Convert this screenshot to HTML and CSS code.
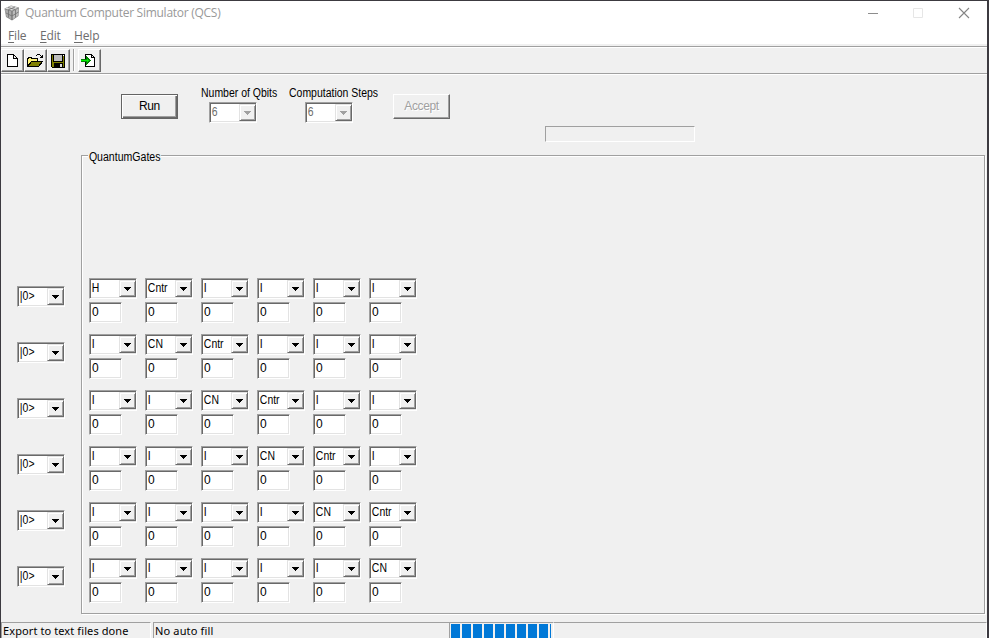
FILE: index.html
```html
<!DOCTYPE html>
<html lang="en">
<head>
<meta charset="utf-8">
<title>Quantum Computer Simulator (QCS)</title>
<link rel="stylesheet" href="styles.css">
</head>
<body>
<div class="window">
  <header class="titlebar">
    <svg class="appicon" width="16" height="16" viewBox="0 0 16 16">
      <path d="M0.500 3.500 7 .5l8 2-.5 8.500-6.500 4.500-6-3.500z" fill="#8a8a8a"/>
      <path d="M1 3.500 7 1l7 1.500-6 3z" fill="#ddd"/>
      <path d="M1 4.500l6.500 2v8L2.500 11.500z" fill="#aaa"/>
      <path d="M8.500 6.500 14.500 3.500l-.5 7L8.500 14.500z" fill="#bbb"/>
      <path d="M8 6v9M2 8l6 3 6.500-4M4.500 5v7.500M11.500 5v7.500M4 2.500l7 2M11 2 4 5" stroke="#707070" stroke-width=".8" fill="none"/>
    </svg>
    <span class="title">Quantum Computer Simulator (QCS)</span>
    <svg class="controls" width="104" height="12" viewBox="0 0 104 12" fill="none">
      <path d="M1 6.500h10" stroke="#8d8d8d"/>
      <path d="M46.500 1.500h9v9h-9z" stroke="#e6e6e6"/>
      <path d="M92 1l10 10M102 1 92 11" stroke="#858585" stroke-width="1.100"/>
    </svg>
  </header>
  <nav class="menu"><span class="m-file"><u>F</u>ile</span><span class="m-edit"><u>E</u>dit</span><span class="m-help"><u>H</u>elp</span></nav>
  <div class="toolbar">
    <button class="tool"><svg width="16" height="16" viewBox="0 0 16 16" shape-rendering="crispEdges"><path d="M3.500 1.500h6l4 4v8h-10zM9.500 1.500v4h4" fill="#fff" stroke="#000"/></svg></button>
    <button class="tool"><svg width="16" height="16" viewBox="0 0 16 16" shape-rendering="crispEdges"><path d="M.5 13.500v-8h1v-1h3v1h6v3" fill="#fff47a" stroke="#000"/><path d="M.5 13.500l4-5h11l-4 5z" fill="#808000" stroke="#000"/><path d="M9 2h1v1H9zM10 1h3v1h-3zM13 2h1v1h-1zM14 3h1v1h-1zM15 2h1v3h-1zM13 4h3v1h-3z"/></svg></button>
    <button class="tool"><svg width="16" height="16" viewBox="0 0 16 16" shape-rendering="crispEdges"><path d="M1 1h14v14H2l-1-1z"/><path d="M2 2h12v12H2z" fill="#808000"/><path d="M3 1h10v8H3z"/><path d="M4 2h8v6H4z" fill="#c0c0c0"/><path d="M4 10h9v4H4z"/><path d="M10 11h2v3h-2z" fill="#ddd"/><path d="M13 2h1v1h-1z" fill="#fff"/></svg></button>
    <i class="divider"></i>
    <button class="tool"><svg width="16" height="16" viewBox="0 0 16 16" shape-rendering="crispEdges"><path d="M5.500 1.500h6l3 3v9h-9zM11.500 1.500v3h3" fill="#fff" stroke="#000"/><path d="M1 6h5V3h1l4 4.500L7 12H6V9H1z" fill="#008000"/><path d="M1 7h6V5l2 2.500L7 10V8H1z" fill="#00f000"/></svg></button>
  </div>
  <main class="client">
    <div class="controls-row">
      <button class="push default">Run</button>
      <label class="field qbits"><span class="caption">Number of Qbits</span><span class="combo off"><b>6</b><i></i></span></label>
      <label class="field steps"><span class="caption">Computation Steps</span><span class="combo off"><b>6</b><i></i></span></label>
      <button class="push disabled">Accept</button>
      <div class="progress"></div>
    </div>
    <div class="work">
      <div class="inputs" id="inputs"></div>
      <section class="gates"><span class="legend">QuantumGates</span><div class="grid" id="grid"></div></section>
    </div>
  </main>
  <footer class="status">
    <div class="panel first"><span>Export to text files done</span></div>
    <div class="panel second"><span>No auto fill</span><div class="blocks"><i></i><i></i><i></i><i></i><i></i><i></i><i></i><i></i><i></i><i></i></div></div>
    <div class="panel last"></div>
  </footer>
</div>
<script src="app.js"></script>
</body>
</html>
```
FILE: styles.css
```css
* { box-sizing: border-box; }
body { margin: 0; background: #3c3a40; width: 989px; height: 638px; overflow: hidden; font: 12px "Liberation Sans", Arial, sans-serif; color: #000; }
button { margin: 0; padding: 0; border: 0; font: inherit; color: inherit; border-radius: 0; }
.window { margin: 1px 2px 0 1px; height: 637px; background: #f0f0f0; display: flex; flex-direction: column; }
.titlebar { flex: none; height: 25px; background: #fff; display: flex; padding-left: 3px; }
.appicon { margin-top: 4px; }
.title { margin-left: 5px; font: 12px/24px "Open Sans", sans-serif; color: #999; white-space: nowrap; letter-spacing: -.27px; }
.controls { margin: 6px 16px 0 auto; }
.menu { flex: none; height: 18px; background: #fff; display: flex; padding-left: 7px; font: 12px/20px "Open Sans", sans-serif; color: #6d6d6d; letter-spacing: -.15px; }
.menu u { text-underline-offset: 2px; }
.m-file { width: 32px; }
.m-edit { width: 34px; }
.toolbar { flex: none; height: 31px; padding-top: 5px; display: flex; background: linear-gradient(#f0f0f0 2px, #a0a0a0 2px, #a0a0a0 3px, #fff 3px, #fff 4px, #f0f0f0 4px, #f0f0f0 29px, #a0a0a0 29px, #a0a0a0 30px, #fff 30px); }
.tool { width: 23px; height: 23px; background: #f0f0f0; display: flex; justify-content: center; align-items: center; border: 1px solid; border-color: #fff #696969 #696969 #fff; box-shadow: inset -1px -1px #a0a0a0; }
.tool svg { margin-left: -1px; flex: none; }
.divider { width: 2px; height: 22px; margin: 0 3px; border-left: 1px solid #a0a0a0; border-right: 1px solid #fff; }
.divider + .tool svg { margin-left: -3px; }
.client { height: 546px; display: flex; flex-direction: column; }
.controls-row { height: 80px; flex: none; display: flex; padding: 12px 0 0 120px; align-items: flex-start; }
.push { width: 57px; height: 25px; margin-top: 7px; background: #f0f0f0; border: 1px solid; border-color: #fff #696969 #696969 #fff; box-shadow: inset -1px -1px #a0a0a0; line-height: 21px; padding-bottom: 1px; text-align: center; letter-spacing: -.4px; }
.default { border-color: #646464; box-shadow: inset 1px 1px #fff, inset -1px -1px #696969, inset -2px -2px #a0a0a0; }
.disabled { color: #a0a0a0; text-shadow: 1px 1px #fff; margin-left: 8px; }
.field { display: flex; flex-direction: column; white-space: nowrap; line-height: 14px; margin-top: -1px; }
.caption { transform: scaleX(.873); transform-origin: left; }
.field .combo { margin: 2px 0 0 8px; }
.qbits { width: 88px; margin-left: 23px; }
.steps { width: 96px; }
.steps .combo { margin-left: 16px; }
.combo, .edit { display: flex; height: 21px; background: #fff; border: 1px solid; border-color: #a0a0a0 #fff #fff #a0a0a0; box-shadow: inset 1px 1px #696969, inset -1px -1px #e3e3e3; }
.combo { width: 48px; padding: 1px 0 1px 1px; }
.combo b { flex: 1; font-weight: 400; line-height: 17px; padding-left: 1px; white-space: nowrap; transform: scaleX(.87); transform-origin: left; }
.combo i { flex: none; width: 17px; height: 17px; background: #f0f0f0; border: 1px solid; border-color: #e3e3e3 #696969 #696969 #e3e3e3; box-shadow: inset 1px 1px #fff, inset -1px -1px #a0a0a0; padding: 6px 0 0 4px; }
.combo i::after { content: ""; display: block; width: 7px; height: 4px; background: #000; clip-path: polygon(0 0, 7px 0, 7px 1px, 6px 1px, 6px 2px, 5px 2px, 5px 3px, 4px 3px, 4px 4px, 3px 4px, 3px 3px, 2px 3px, 2px 2px, 1px 2px, 1px 1px, 0 1px); }
.off { color: #6d6d6d; }
.combo.off i::after { background: #a0a0a0; }
.edit { width: 33px; line-height: 18px; padding-left: 2px; letter-spacing: -.3px; }
.progress { width: 150px; height: 16px; margin: 39px 0 0 95px; border: 1px solid; border-color: #a0a0a0 #fff #fff #a0a0a0; }
.work { display: flex; height: 462px; }
.inputs { width: 80px; padding: 131px 0 0 16px; display: flex; flex-direction: column; gap: 35px; }
.gates { position: relative; width: 904px; height: 459px; padding: 122px 0 0 7px; border: 1px solid #a0a0a0; box-shadow: 1px 1px #fff, inset 1px 1px #fff; }
.legend { position: absolute; top: -6px; left: 6px; padding: 0 1px; background: #f0f0f0; line-height: 14px; transform: scaleX(.88); transform-origin: left; }
.grid { display: grid; grid-template-columns: repeat(6, 48px); column-gap: 8px; row-gap: 11px; }
.cell { height: 45px; display: flex; flex-direction: column; gap: 3px; }
.status { height: 16px; margin-top: 1px; display: flex; gap: 2px; overflow: hidden; font: 11px/18px "Noto Sans", sans-serif; white-space: nowrap; }
.panel { border-top: 1px solid #a0a0a0; border-left: 1px solid #a0a0a0; border-right: 1px solid #fff; padding-left: 1px; display: flex; }
.first { width: 150px; letter-spacing: .1px; }
.second { width: 401px; justify-content: space-between; letter-spacing: .15px; }
.panel span { margin-top: -1px; }
.last { flex: 1; border-left: 0; margin-left: -2px; }
.blocks { display: flex; gap: 2px; width: 104px; border-left: 1px solid #a0a0a0; padding: 1px 0 0 1px; }
.blocks i { width: 9px; height: 14px; background: #0078d7; }
.blocks i:last-child { width: 1px; }
```
FILE: app.js
```js
const size = 6;
const combo = (text) => `<span class="combo"><b>${text}</b><i></i></span>`;
document.getElementById("inputs").innerHTML = combo("|0&gt;").repeat(size);
let cells = "";
for (let row = 0; row < size; row++) {
  for (let col = 0; col < size; col++) {
    const gate = row === 0 && col === 0 ? "H" : col === row ? "CN" : col === row + 1 ? "Cntr" : "I";
    cells += `<div class="cell">${combo(gate)}<span class="edit">0</span></div>`;
  }
}
document.getElementById("grid").innerHTML = cells;
```
